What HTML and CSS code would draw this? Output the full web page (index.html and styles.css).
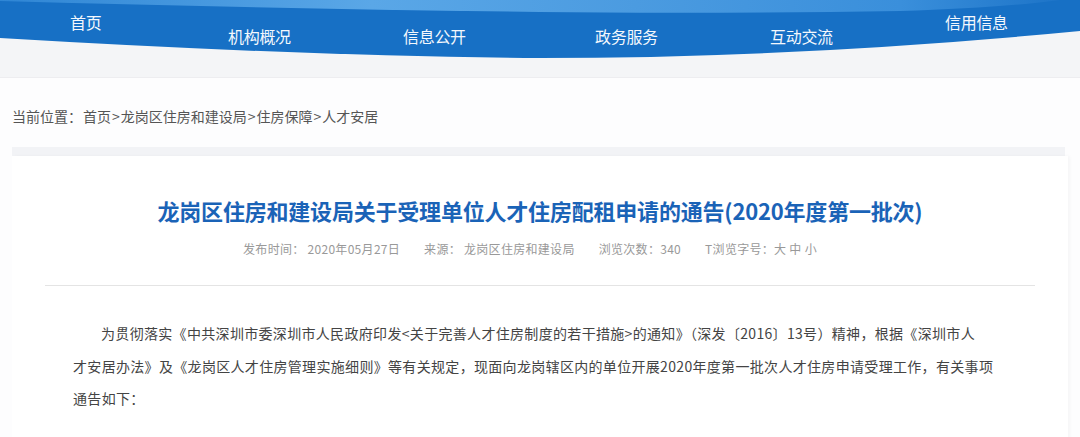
FILE: index.html
```html
<!DOCTYPE html>
<html lang="zh-CN">
<head>
	<meta charset="utf-8">
	<meta name="viewport" content="width=device-width, initial-scale=1">
	<title>龙岗区住房和建设局关于受理单位人才住房配租申请的通告</title>
	<link rel="stylesheet" href="styles.css">
</head>
<body>
<header class="top">
	<svg class="wave" viewBox="0 0 1080 77" preserveAspectRatio="none" aria-hidden="true">
		<defs>
			<linearGradient id="sky" x1="0" x2="1" y1="0" y2="0">
				<stop offset="0" stop-color="#2f86d5"/>
				<stop offset="0.35" stop-color="#5aa7e7"/>
				<stop offset="0.6" stop-color="#4b9be0"/>
				<stop offset="0.85" stop-color="#3a8fdb"/>
				<stop offset="1" stop-color="#1d74c8"/>
			</linearGradient>
		</defs>
		<rect width="1080" height="77" fill="#f4f5f7"/>
		<path d="M0,0H1080V31Q800,58 540,58Q300,56 0,38Z" fill="#1770c5"/>
		<path d="M0,0H1060Q1000,8 900,11Q700,14 540,12Q250,8 0,1Z" fill="url(#sky)"/>
	</svg>
	<nav class="nav">
		<a href="#" class="up">首页</a>
		<a href="#">机构概况</a>
		<a href="#">信息公开</a>
		<a href="#">政务服务</a>
		<a href="#">互动交流</a>
		<a href="#" class="up">信用信息</a>
	</nav>
</header>

<main class="page">
	<div class="crumbs">当前位置：<a href="#">首页</a>&gt;<a href="#">龙岗区住房和建设局</a>&gt;<a href="#">住房保障</a>&gt;<a href="#">人才安居</a></div>
	<div class="strip"></div>

	<article class="card">
		<h1>龙岗区住房和建设局关于受理单位人才住房配租申请的通告(2020年度第一批次)</h1>
		<div class="meta">
			<span>发布时间： 2020年05月27日</span>
			<span>来源： 龙岗区住房和建设局</span>
			<span>浏览次数：340</span>
			<span>T浏览字号：大 中 小</span>
		</div>
		<div class="content">
			<p>为贯彻落实《中共深圳市委深圳市人民政府印发&lt;关于完善人才住房制度的若干措施&gt;的通知》（深发〔2016〕13号）精神，根据《深圳市人<br>才安居办法》及《龙岗区人才住房管理实施细则》等有关规定，现面向龙岗辖区内的单位开展2020年度第一批次人才住房申请受理工作，有关事项<br>通告如下：</p>
		</div>
	</article>
</main>
</body>
</html>
```

FILE: styles.css
```css
html,body
{
	padding: 0;
	border: 0;
	margin: 0;
}

body
{
	background: #fdfdfe;
	color: #444;
	font-family: "Noto Sans CJK SC", "Noto Sans", sans-serif;
	font-size: 14px;
	overflow: hidden;
}

a
{
	color: inherit;
	text-decoration: none;
}

/* header band */

.top
{
	position: relative;
	height: 77px;
	border-bottom: 1px solid #ededf0;
}

.wave
{
	position: absolute;
	top: 0;
	left: 0;
	width: 100%;
	height: 100%;
}

.nav
{
	position: relative;
	display: grid;
	grid-template-columns: 158px 175px 192px 175px 175px auto;
	align-items: start;
	padding-left: 70px;
}

.nav a
{
	margin-top: 24px;
	color: #f4f8fd;
	font-size: 16px;
	line-height: 24px;
	letter-spacing: -0.3px;
}

.nav a.up
{
	margin-top: 10px;
}

/* page */

.page
{
	margin: 0 12px 0 12px;
}

.crumbs
{
	padding-top: 26px;
	color: #555;
	line-height: 24px;
}

.crumbs a
{
	margin: 0 1px;
}

.strip
{
	height: 9px;
	margin-top: 19px;
	margin-right: 3px;
	background: #f2f3f6;
}

.card
{
	padding: 38px 33px 40px;
	background: #fff;
	box-shadow: 2px 0 3px rgba(0, 0, 0, 0.03);
}

h1
{
	margin: 0;
	color: #1a63b7;
	font-size: 22px;
	font-weight: bold;
	line-height: 32px;
	text-align: center;
	letter-spacing: -0.2px;
}

.meta
{
	display: flex;
	justify-content: center;
	gap: 24px;
	margin-top: 13px;
	padding-right: 20px;
	color: #999;
	font-size: 12px;
	line-height: 20px;
	letter-spacing: 0.3px;
}

.content
{
	margin-top: 26px;
	padding: 31px 44px 0 28px;
	border-top: 1px solid #e4e4e4;
}

.content p
{
	margin: 0;
	line-height: 32.5px;
	text-indent: 28px;
	letter-spacing: 0.32px;
	white-space: nowrap;
}
```
